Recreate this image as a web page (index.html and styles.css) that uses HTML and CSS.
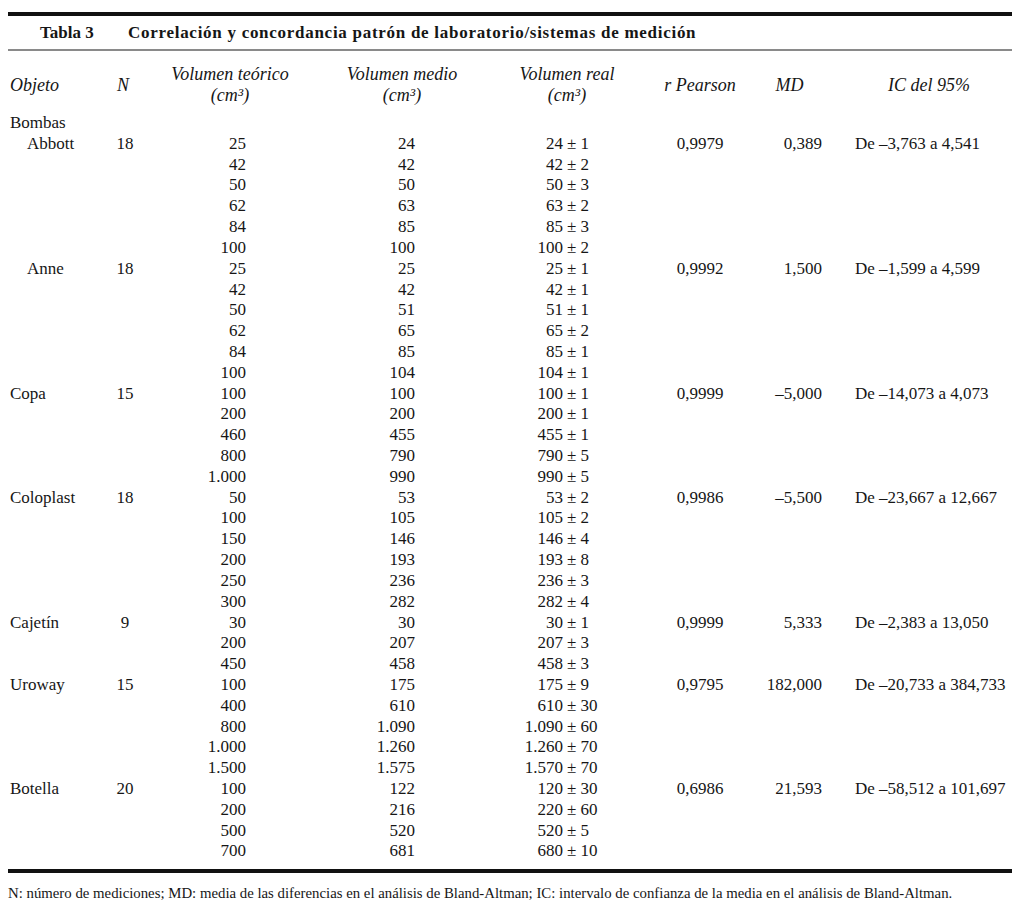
FILE: index.html
```html
<!DOCTYPE html>
<html lang="es">
<head>
<meta charset="utf-8">
<title>Tabla 3</title>
<link rel="stylesheet" href="styles.css">
</head>
<body>
<div class="page">
  <div class="rule-thick"></div>
  <div class="title"><span class="tnum">Tabla 3</span><span class="ttext">Correlación y concordancia patrón de laboratorio/sistemas de medición</span></div>
  <div class="rule-gray"></div>
  <div class="head">
    <div class="h c1">Objeto</div>
    <div class="h c2">N</div>
    <div class="h c3">Volumen teórico<br>(cm³)</div>
    <div class="h c4">Volumen medio<br>(cm³)</div>
    <div class="h c5">Volumen real<br>(cm³)</div>
    <div class="h c6">r Pearson</div>
    <div class="h c7">MD</div>
    <div class="h c8">IC del 95%</div>
  </div>
  <div class="body">
    <div class="row"><span class="o">Bombas</span></div>
    <div class="row"><span class="o sub">Abbott</span><span class="n">18</span><span class="t">25</span><span class="m">24</span><span class="rv">24</span><span class="re">± 1</span><span class="p">0,9979</span><span class="d">0,389</span><span class="ic">De –3,763 a 4,541</span></div>
    <div class="row"><span class="t">42</span><span class="m">42</span><span class="rv">42</span><span class="re">± 2</span></div>
    <div class="row"><span class="t">50</span><span class="m">50</span><span class="rv">50</span><span class="re">± 3</span></div>
    <div class="row"><span class="t">62</span><span class="m">63</span><span class="rv">63</span><span class="re">± 2</span></div>
    <div class="row"><span class="t">84</span><span class="m">85</span><span class="rv">85</span><span class="re">± 3</span></div>
    <div class="row"><span class="t">100</span><span class="m">100</span><span class="rv">100</span><span class="re">± 2</span></div>
    <div class="row"><span class="o sub">Anne</span><span class="n">18</span><span class="t">25</span><span class="m">25</span><span class="rv">25</span><span class="re">± 1</span><span class="p">0,9992</span><span class="d">1,500</span><span class="ic">De –1,599 a 4,599</span></div>
    <div class="row"><span class="t">42</span><span class="m">42</span><span class="rv">42</span><span class="re">± 1</span></div>
    <div class="row"><span class="t">50</span><span class="m">51</span><span class="rv">51</span><span class="re">± 1</span></div>
    <div class="row"><span class="t">62</span><span class="m">65</span><span class="rv">65</span><span class="re">± 2</span></div>
    <div class="row"><span class="t">84</span><span class="m">85</span><span class="rv">85</span><span class="re">± 1</span></div>
    <div class="row"><span class="t">100</span><span class="m">104</span><span class="rv">104</span><span class="re">± 1</span></div>
    <div class="row"><span class="o">Copa</span><span class="n">15</span><span class="t">100</span><span class="m">100</span><span class="rv">100</span><span class="re">± 1</span><span class="p">0,9999</span><span class="d">–5,000</span><span class="ic">De –14,073 a 4,073</span></div>
    <div class="row"><span class="t">200</span><span class="m">200</span><span class="rv">200</span><span class="re">± 1</span></div>
    <div class="row"><span class="t">460</span><span class="m">455</span><span class="rv">455</span><span class="re">± 1</span></div>
    <div class="row"><span class="t">800</span><span class="m">790</span><span class="rv">790</span><span class="re">± 5</span></div>
    <div class="row"><span class="t">1.000</span><span class="m">990</span><span class="rv">990</span><span class="re">± 5</span></div>
    <div class="row"><span class="o">Coloplast</span><span class="n">18</span><span class="t">50</span><span class="m">53</span><span class="rv">53</span><span class="re">± 2</span><span class="p">0,9986</span><span class="d">–5,500</span><span class="ic">De –23,667 a 12,667</span></div>
    <div class="row"><span class="t">100</span><span class="m">105</span><span class="rv">105</span><span class="re">± 2</span></div>
    <div class="row"><span class="t">150</span><span class="m">146</span><span class="rv">146</span><span class="re">± 4</span></div>
    <div class="row"><span class="t">200</span><span class="m">193</span><span class="rv">193</span><span class="re">± 8</span></div>
    <div class="row"><span class="t">250</span><span class="m">236</span><span class="rv">236</span><span class="re">± 3</span></div>
    <div class="row"><span class="t">300</span><span class="m">282</span><span class="rv">282</span><span class="re">± 4</span></div>
    <div class="row"><span class="o">Cajetín</span><span class="n">9</span><span class="t">30</span><span class="m">30</span><span class="rv">30</span><span class="re">± 1</span><span class="p">0,9999</span><span class="d">5,333</span><span class="ic">De –2,383 a 13,050</span></div>
    <div class="row"><span class="t">200</span><span class="m">207</span><span class="rv">207</span><span class="re">± 3</span></div>
    <div class="row"><span class="t">450</span><span class="m">458</span><span class="rv">458</span><span class="re">± 3</span></div>
    <div class="row"><span class="o">Uroway</span><span class="n">15</span><span class="t">100</span><span class="m">175</span><span class="rv">175</span><span class="re">± 9</span><span class="p">0,9795</span><span class="d">182,000</span><span class="ic">De –20,733 a 384,733</span></div>
    <div class="row"><span class="t">400</span><span class="m">610</span><span class="rv">610</span><span class="re">± 30</span></div>
    <div class="row"><span class="t">800</span><span class="m">1.090</span><span class="rv">1.090</span><span class="re">± 60</span></div>
    <div class="row"><span class="t">1.000</span><span class="m">1.260</span><span class="rv">1.260</span><span class="re">± 70</span></div>
    <div class="row"><span class="t">1.500</span><span class="m">1.575</span><span class="rv">1.570</span><span class="re">± 70</span></div>
    <div class="row"><span class="o">Botella</span><span class="n">20</span><span class="t">100</span><span class="m">122</span><span class="rv">120</span><span class="re">± 30</span><span class="p">0,6986</span><span class="d">21,593</span><span class="ic">De –58,512 a 101,697</span></div>
    <div class="row"><span class="t">200</span><span class="m">216</span><span class="rv">220</span><span class="re">± 60</span></div>
    <div class="row"><span class="t">500</span><span class="m">520</span><span class="rv">520</span><span class="re">± 5</span></div>
    <div class="row"><span class="t">700</span><span class="m">681</span><span class="rv">680</span><span class="re">± 10</span></div>
  </div>
  <div class="rule-thick"></div>
  <p class="note">N: número de mediciones; MD: media de las diferencias en el análisis de Bland-Altman; IC: intervalo de confianza de la media en el análisis de Bland-Altman.</p>
</div>
</body>
</html>
```

FILE: styles.css
```css
html, body {
  margin: 0;
  padding: 0;
  background: #ffffff;
}

body {
  font-family: "Liberation Serif", "Times New Roman", serif;
  color: #161616;
  font-size: 17px;
}

.page {
  width: 1004px;
  margin-left: 8px;
  padding-top: 12px;
}

.rule-thick {
  height: 4px;
  background: #111;
}

.rule-gray {
  height: 2px;
  background: #8a8a8a;
}

.title {
  display: flex;
  font-weight: bold;
  font-size: 17px;
  line-height: 21px;
  padding: 6px 0 6px 32px;
}

.tnum {
  width: 88px;
}

.ttext {
  letter-spacing: 0.72px;
}

.head,
.row {
  display: grid;
  grid-template-columns: 92px 50px 160px 184px 69px 77px 120px 75px 177px;
}

.head {
  align-items: center;
  font-style: italic;
  font-size: 18px;
  line-height: 21px;
  padding-top: 13px;
  padding-bottom: 7px;
}

.h {
  text-align: center;
}

.h.c1 {
  text-align: left;
  padding-left: 2px;
}

.h.c2 {
  padding-right: 4px;
}

.h.c5 {
  grid-column: span 2;
}

.h.c7 {
  padding-right: 16px;
}

.h.c8 {
  padding-left: 11px;
}

.body {
  padding-bottom: 7px;
}

.row {
  line-height: 20.82px;
  white-space: nowrap;
}

.o {
  grid-column: 1;
  padding-left: 2px;
}

.o.sub {
  padding-left: 19px;
}

.n {
  grid-column: 2;
  text-align: center;
}

.t {
  grid-column: 3;
  text-align: right;
  padding-right: 64px;
}

.m {
  grid-column: 4;
  text-align: right;
  padding-right: 79px;
}

.rv {
  grid-column: 5;
  text-align: right;
}

.re {
  grid-column: 6;
  padding-left: 4px;
}

.p {
  grid-column: 7;
  text-align: center;
}

.d {
  grid-column: 8;
  text-align: right;
  padding-right: 13px;
}

.ic {
  grid-column: 9;
  padding-left: 20px;
}

.note {
  margin: 11px 0 0 0;
  font-size: 14.8px;
  line-height: 18px;
}
```
